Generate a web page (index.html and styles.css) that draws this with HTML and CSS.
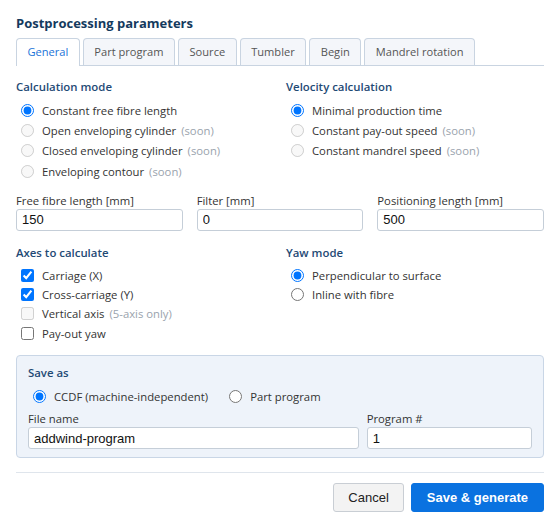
FILE: index.html
```html
<!DOCTYPE html>
<html lang="en">
  <head>
    <meta charset="UTF-8" />
    <title>Postprocessing parameters</title>
    <link rel="stylesheet" href="styles.css">
  </head>
  <body>
    <div class="dialog">
      <h1 class="title">Postprocessing parameters</h1>

      <ul class="tabs">
        <li class="active">General</li>
        <li>Part program</li>
        <li>Source</li>
        <li>Tumbler</li>
        <li>Begin</li>
        <li>Mandrel rotation</li>
      </ul>

      <div class="cols top">
        <div class="group">
          <h2>Calculation mode</h2>
          <label class="opt"><input type="radio" name="calc" checked /> Constant free fibre length</label>
          <label class="opt off"><input type="radio" name="calc" disabled /> Open enveloping cylinder <span class="soon">(soon)</span></label>
          <label class="opt off"><input type="radio" name="calc" disabled /> Closed enveloping cylinder <span class="soon">(soon)</span></label>
          <label class="opt off"><input type="radio" name="calc" disabled /> Enveloping contour <span class="soon">(soon)</span></label>
        </div>
        <div class="group">
          <h2>Velocity calculation</h2>
          <label class="opt"><input type="radio" name="vel" checked /> Minimal production time</label>
          <label class="opt off"><input type="radio" name="vel" disabled /> Constant pay-out speed <span class="soon">(soon)</span></label>
          <label class="opt off"><input type="radio" name="vel" disabled /> Constant mandrel speed <span class="soon">(soon)</span></label>
        </div>
      </div>

      <div class="fields">
        <label class="field">Free fibre length [mm]<input type="text" value="150" /></label>
        <label class="field">Filter [mm]<input type="text" value="0" /></label>
        <label class="field">Positioning length [mm]<input type="text" value="500" /></label>
      </div>

      <div class="cols">
        <div class="group">
          <h2>Axes to calculate</h2>
          <label class="opt chk"><input type="checkbox" checked /> Carriage (X)</label>
          <label class="opt chk"><input type="checkbox" checked /> Cross-carriage (Y)</label>
          <label class="opt chk off"><input type="checkbox" disabled /> Vertical axis <span class="soon">(5-axis only)</span></label>
          <label class="opt chk"><input type="checkbox" /> Pay-out yaw</label>
        </div>
        <div class="group">
          <h2>Yaw mode</h2>
          <label class="opt chk"><input type="radio" name="yaw" checked /> Perpendicular to surface</label>
          <label class="opt chk"><input type="radio" name="yaw" /> Inline with fibre</label>
        </div>
      </div>

      <div class="saveas">
        <h2>Save as</h2>
        <div class="inline">
          <label class="opt"><input type="radio" name="fmt" checked /> CCDF (machine-independent)</label>
          <label class="opt"><input type="radio" name="fmt" /> Part program</label>
        </div>
        <div class="row2">
          <label class="field">File name<input type="text" value="addwind-program" /></label>
          <label class="field">Program #<input type="text" value="1" /></label>
        </div>
      </div>

      <div class="footer">
        <button class="btn">Cancel</button>
        <button class="btn primary">Save &amp; generate</button>
      </div>
    </div>
  </body>
</html>
```

FILE: styles.css
```css
* {
  margin: 0;
  padding: 0;
  box-sizing: border-box;
}
body {
  background-color: #fff;
  font-family: "Open Sans", "Noto Sans", sans-serif;
  font-size: 11.3px;
  color: #333;
}
.dialog {
  width: 560px;
  padding: 15px 16px 12px;
}
.title {
  font-size: 13px;
  font-weight: 700;
  line-height: 17px;
  color: #143a5e;
}
.tabs {
  display: flex;
  gap: 3px;
  margin-top: 6px;
  list-style-type: none;
  border-bottom: 1px solid #c9d4e1;
}
.tabs li {
  height: 27px;
  line-height: 25px;
  padding: 0 10.5px;
  font-size: 11.1px;
  color: #555;
  background: #f4f6fa;
  border: 1px solid #c9d4e1;
  border-bottom: none;
  border-radius: 4px 4px 0 0;
}
.tabs li.active {
  color: #1a73d8;
  background: #fff;
  margin-bottom: -1px;
  height: 28px;
}
.cols {
  display: grid;
  grid-template-columns: 1fr 1fr;
  column-gap: 12px;
}
.cols.top {
  margin-top: 12px;
}
.group h2,
.saveas h2 {
  font-size: 11.4px;
  font-weight: 600;
  color: #1f4a75;
  line-height: 18px;
}
.group h2 {
  margin-bottom: 4px;
}
.opt {
  display: flex;
  align-items: center;
  gap: 2px;
  height: 20.4px;
  padding-left: 5px;
  color: #333;
  white-space: nowrap;
}
.opt.chk {
  height: 19.3px;
}
.opt input {
  margin: 0 6px 0 0;
  width: 13px;
  height: 13px;
}
.soon {
  color: #9aa3ad;
  margin-left: 3px;
}
.fields {
  display: grid;
  grid-template-columns: 1fr 1fr 1fr;
  column-gap: 14px;
  margin-top: 12px;
  margin-bottom: 13px;
}
.field {
  display: flex;
  flex-direction: column;
  min-width: 0;
  line-height: 14px;
  color: #333;
}
.field input {
  width: 100%;
  min-width: 0;
  height: 22px;
  flex: none;
  margin-top: 1px;
  padding: 0 5px;
  border: 1px solid #c5ced8;
  border-radius: 3px;
  font-family: "Liberation Sans", Arial, sans-serif;
  font-size: 13px;
  color: #111;
  background: #fff;
}
.saveas {
  margin-top: 12px;
  padding: 8px 11px 8px;
  background: #eef3fa;
  border: 1px solid #c9d6e6;
  border-radius: 4px;
}
.saveas h2 {
  margin-bottom: 5px;
}
.inline {
  display: flex;
  gap: 16px;
}
.row2 {
  display: grid;
  grid-template-columns: 2fr 1fr;
  column-gap: 8px;
  margin-top: 5px;
}
.footer {
  display: flex;
  justify-content: flex-end;
  gap: 7px;
  margin-top: 14px;
  padding-top: 10px;
  border-top: 1px solid #dfe5ec;
}
.btn {
  height: 29px;
  padding: 0 14px;
  font-family: "Liberation Sans", Arial, sans-serif;
  font-size: 13px;
  color: #222;
  background: #f3f3f3;
  border: 1px solid #c9ced4;
  border-radius: 3px;
}
.btn.primary {
  padding: 0 15px;
  font-weight: 700;
  color: #fff;
  background: #0a72e0;
  border-color: #0a72e0;
}
```
